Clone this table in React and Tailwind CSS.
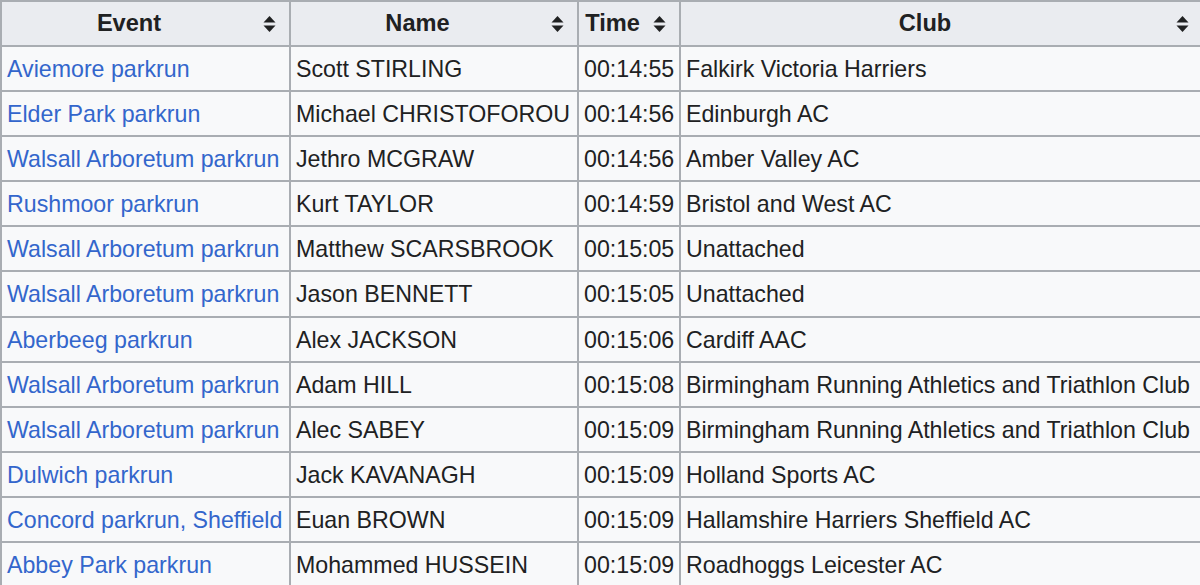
const ROWS = [
  ['Aviemore parkrun', 'Scott STIRLING', '00:14:55', 'Falkirk Victoria Harriers'],
  ['Elder Park parkrun', 'Michael CHRISTOFOROU', '00:14:56', 'Edinburgh AC'],
  ['Walsall Arboretum parkrun', 'Jethro MCGRAW', '00:14:56', 'Amber Valley AC'],
  ['Rushmoor parkrun', 'Kurt TAYLOR', '00:14:59', 'Bristol and West AC'],
  ['Walsall Arboretum parkrun', 'Matthew SCARSBROOK', '00:15:05', 'Unattached'],
  ['Walsall Arboretum parkrun', 'Jason BENNETT', '00:15:05', 'Unattached'],
  ['Aberbeeg parkrun', 'Alex JACKSON', '00:15:06', 'Cardiff AAC'],
  ['Walsall Arboretum parkrun', 'Adam HILL', '00:15:08', 'Birmingham Running Athletics and Triathlon Club'],
  ['Walsall Arboretum parkrun', 'Alec SABEY', '00:15:09', 'Birmingham Running Athletics and Triathlon Club'],
  ['Dulwich parkrun', 'Jack KAVANAGH', '00:15:09', 'Holland Sports AC'],
  ['Concord parkrun, Sheffield', 'Euan BROWN', '00:15:09', 'Hallamshire Harriers Sheffield AC'],
  ['Abbey Park parkrun', 'Mohammed HUSSEIN', '00:15:09', 'Roadhoggs Leicester AC'],
];

const HEADERS = ['Event', 'Name', 'Time', 'Club'];

function SortIcon() {
  return (
    <svg width="13" height="17" viewBox="0 0 13 17" className="absolute right-[13px] top-1/2 -translate-y-1/2">
      <path d="M6.5 0.5 L12.5 7 L0.5 7 Z" fill="#202122" />
      <path d="M0.5 10 L12.5 10 L6.5 16.5 Z" fill="#202122" />
    </svg>
  );
}

const cell = 'border-2 border-[#a9adb2] pl-[5px] pr-[4px] pt-[2px] whitespace-nowrap leading-none';

export default function App() {
  return (
    <div className="w-[1200px] h-[585px] overflow-hidden bg-white" style={{ fontFamily: '"Liberation Sans", Arial, sans-serif' }}>
      <table className="border-collapse table-fixed text-[23.2px] text-[#202122] bg-[#f8f9fa] w-[1202px]">
        <colgroup>
          <col className="w-[289px]" />
          <col className="w-[288px]" />
          <col className="w-[102px]" />
          <col className="w-[523px]" />
        </colgroup>
        <thead>
          <tr className="h-[45px]">
            {HEADERS.map(h => (
              <th key={h} className="relative bg-[#eaecf0] border-2 border-[#a9adb2] pl-[5px] pr-[38px] font-bold text-[23.6px] text-center whitespace-nowrap leading-none">
                {h}
                <SortIcon />
              </th>
            ))}
          </tr>
        </thead>
        <tbody>
          {ROWS.map((r, i) => (
            <tr key={i} className="h-[45.1px]">
              <td className={`${cell} text-[#3366cc]`}>{r[0]}</td>
              <td className={cell}>{r[1]}</td>
              <td className={cell}>{r[2]}</td>
              <td className={cell}>{r[3]}</td>
            </tr>
          ))}
        </tbody>
      </table>
    </div>
  );
}
